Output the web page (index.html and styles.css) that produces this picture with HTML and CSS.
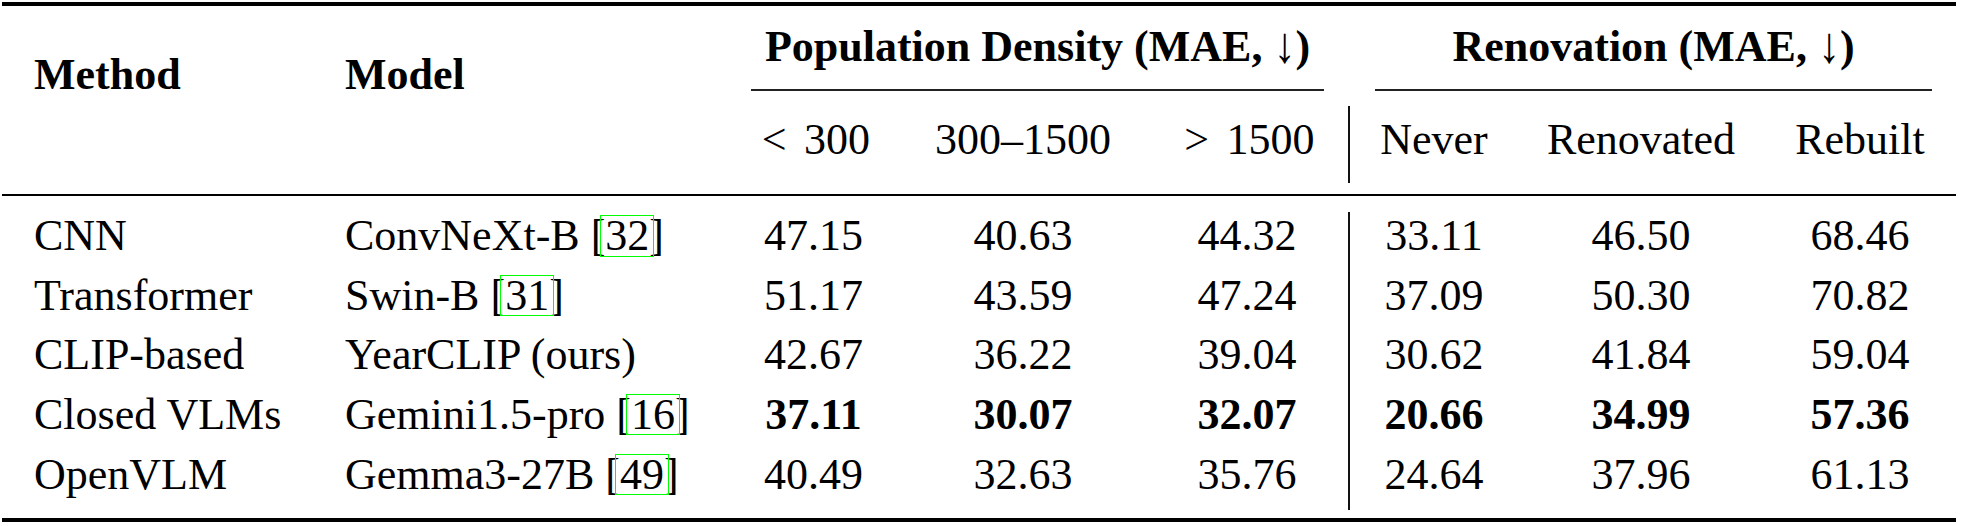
FILE: index.html
```html
<!DOCTYPE html>
<html lang="en">
<head>
<meta charset="utf-8">
<title>MAE table</title>
<link rel="stylesheet" href="styles.css">
</head>
<body>
<div class="table">
  <div class="thead">
    <div class="h-stub">Method</div>
    <div class="h-stub model">Model</div>
    <div class="h-group pop">Population Density (MAE, <span class="arrow">↓</span>)</div>
    <div class="h-group ren">Renovation (MAE, <span class="arrow">↓</span>)</div>
    <div class="h-sub"><span class="rel">&lt;</span>300</div>
    <div class="h-sub">300–1500</div>
    <div class="h-sub"><span class="rel">&gt;</span>1500</div>
    <div class="h-sub sep">Never</div>
    <div class="h-sub">Renovated</div>
    <div class="h-sub">Rebuilt</div>
  </div>
  <div class="tbody">
    <div class="row">
      <div class="c stub">CNN</div>
      <div class="c model">ConvNeXt-B [<span class="cite">32</span>]</div>
      <div class="c n">47.15</div><div class="c n">40.63</div><div class="c n">44.32</div>
      <div class="c n sep">33.11</div><div class="c n">46.50</div><div class="c n">68.46</div>
    </div>
    <div class="row">
      <div class="c stub">Transformer</div>
      <div class="c model">Swin-B [<span class="cite">31</span>]</div>
      <div class="c n">51.17</div><div class="c n">43.59</div><div class="c n">47.24</div>
      <div class="c n sep">37.09</div><div class="c n">50.30</div><div class="c n">70.82</div>
    </div>
    <div class="row">
      <div class="c stub">CLIP-based</div>
      <div class="c model">YearCLIP (ours)</div>
      <div class="c n">42.67</div><div class="c n">36.22</div><div class="c n">39.04</div>
      <div class="c n sep">30.62</div><div class="c n">41.84</div><div class="c n">59.04</div>
    </div>
    <div class="row best">
      <div class="c stub">Closed VLMs</div>
      <div class="c model">Gemini1.5-pro [<span class="cite">16</span>]</div>
      <div class="c n">37.11</div><div class="c n">30.07</div><div class="c n">32.07</div>
      <div class="c n sep">20.66</div><div class="c n">34.99</div><div class="c n">57.36</div>
    </div>
    <div class="row">
      <div class="c stub">OpenVLM</div>
      <div class="c model">Gemma3-27B [<span class="cite">49</span>]</div>
      <div class="c n">40.49</div><div class="c n">32.63</div><div class="c n">35.76</div>
      <div class="c n sep">24.64</div><div class="c n">37.96</div><div class="c n">61.13</div>
    </div>
  </div>
</div>
</body>
</html>
```
FILE: styles.css
```css
* { box-sizing: border-box; }

html, body {
  margin: 0;
  padding: 0;
  background: #ffffff;
}

body {
  font-family: "Liberation Serif", "Times New Roman", serif;
  font-size: 44px;
  color: #000;
}

.table {
  --cols: 318px 407px 173px 246px 202px 170px 246px 192px;
  width: 1954px;
  margin: 2px 0 0 2px;
  border-top: 4px solid #000;
  border-bottom: 4px solid #000;
}

.thead {
  display: grid;
  grid-template-columns: var(--cols);
  border-bottom: 2px solid #000;
}

.h-stub {
  grid-row: 1 / 3;
  font-weight: bold;
  line-height: 48px;
  padding: 45px 0 0 32px;
}

.h-stub.model { padding-left: 25px; }

.h-group {
  grid-column: span 3;
  font-weight: bold;
  text-align: center;
  line-height: 48px;
  padding: 17px 0 18px;
  border-bottom: 2px solid #222;
  white-space: nowrap;
}

.h-group.pop { margin: 0 24px 0 24px; }
.h-group.ren { margin: 0 24px 0 27px; }

.arrow {
  font-weight: normal;
  display: inline-block;
  transform: scaleY(1.15);
  transform-origin: 50% 70%;
}

.h-sub {
  grid-row: 2;
  text-align: center;
  line-height: 48px;
  margin: 15px 0 11px;
  padding: 10px 0 19px;
  white-space: nowrap;
}

.rel {
  display: inline-block;
  width: 1.07em;
  padding-left: 0.11em;
  text-align: left;
}

.sep { border-left: 2px solid #111; }

.tbody {
  padding: 16px 0 8.5px;
}

.row {
  display: grid;
  grid-template-columns: var(--cols);
}

.c {
  line-height: 48px;
  padding: 0.2px 0 11.4px;
  white-space: nowrap;
}

.c.stub { padding-left: 32px; }
.c.model { padding-left: 25px; }
.c.n { text-align: center; }

.row.best .n { font-weight: bold; }

.cite { position: relative; }

.cite::after {
  content: "";
  position: absolute;
  top: 4px;
  bottom: 3.5px;
  left: -5px;
  right: -5px;
  border: 1px solid #00ff00;
}
```
